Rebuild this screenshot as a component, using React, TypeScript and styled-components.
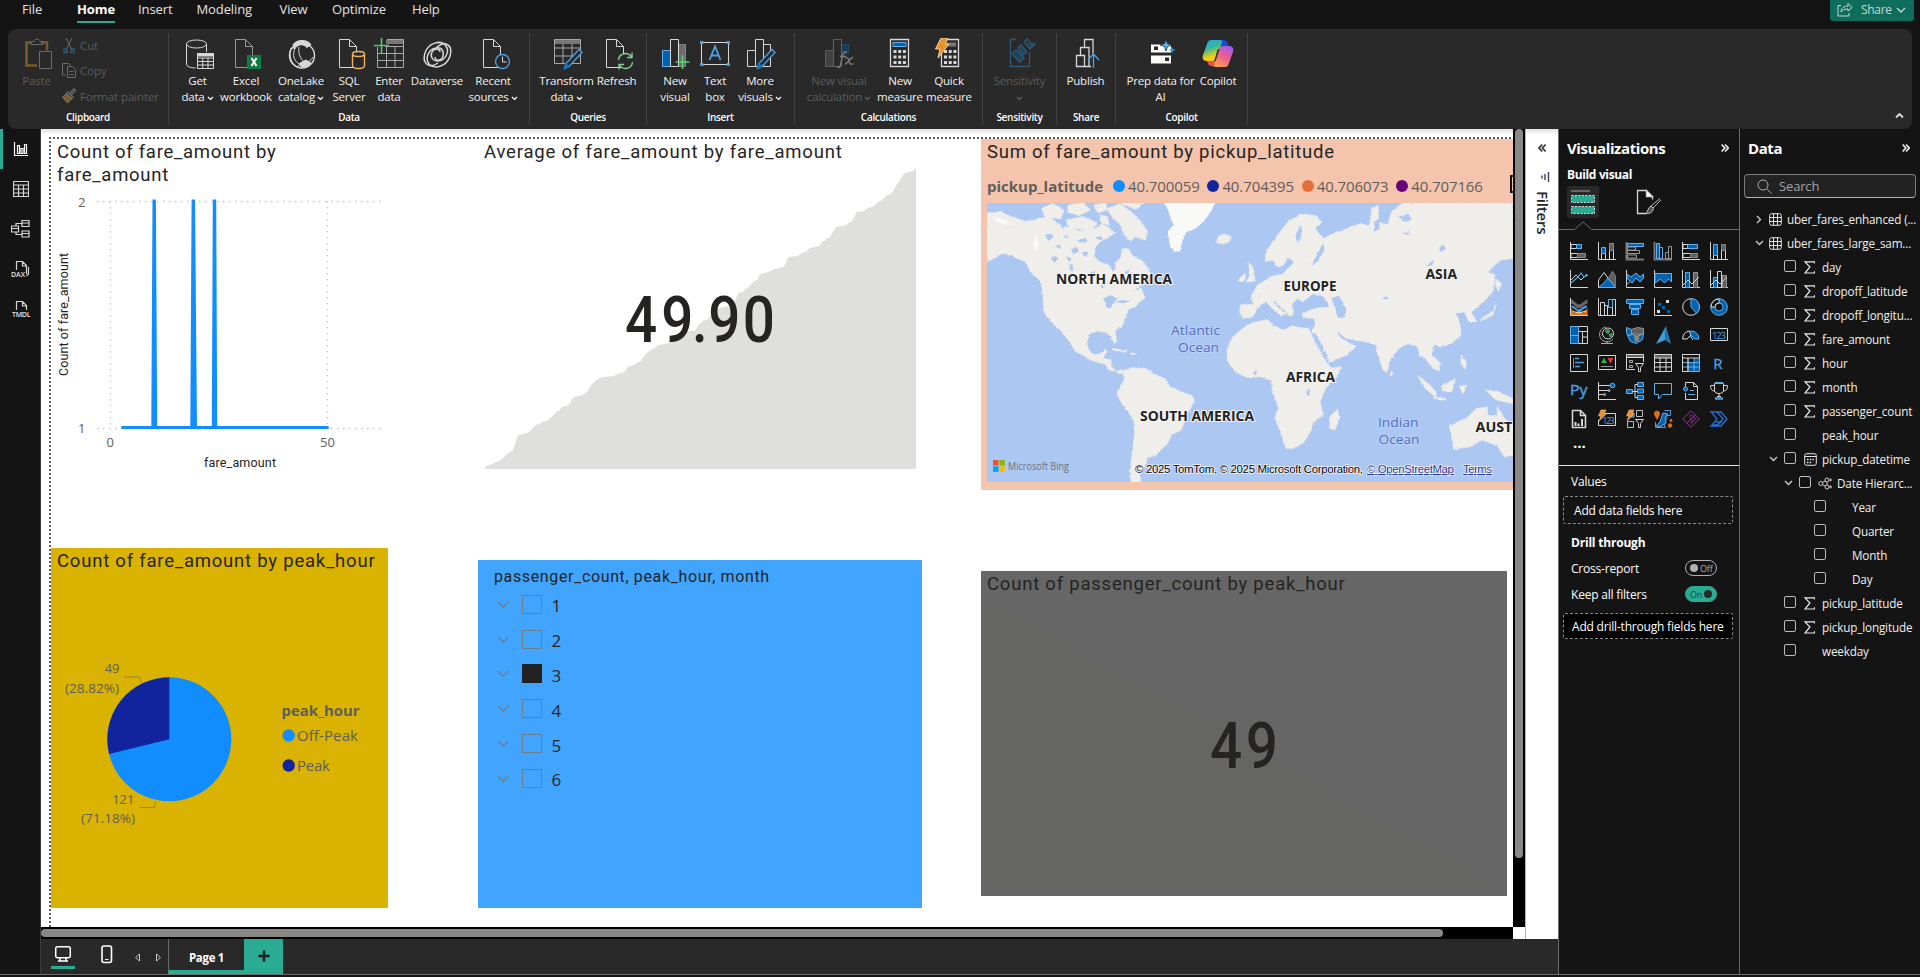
import React from 'react';
import styled, { createGlobalStyle } from 'styled-components';

const UI = `'Open Sans', 'Noto Sans', sans-serif`;
const DIN = `Roboto, 'Open Sans', sans-serif`;
const TEAL = '#2aac94';
const BLUE = '#118dff';
const NAVY = '#12239e';

const Global = createGlobalStyle`
  * { box-sizing: border-box; }
  html, body { margin: 0; background: #141414; }
  body { font-family: ${UI}; color: #fff; overflow: hidden; }
  svg { display: block; flex: none; }
`;

const Window = styled.div`
  display: flex;
  flex-direction: column;
  width: 1920px;
  height: 977px;
  background: #141414;
  overflow: hidden;
`;

/* ---------- menu ---------- */
const MenuBar = styled.nav`
  display: flex;
  flex: none;
  height: 29px;
  padding-left: 22px;
`;
const MenuItem = styled.div<{ $w: number; $active?: boolean }>`
  width: ${p => p.$w}px;
  height: 23px;
  font-size: 13px;
  line-height: 19px;
  letter-spacing: -0.1px;
  font-weight: ${p => (p.$active ? 700 : 400)};
  color: ${p => (p.$active ? '#fff' : '#e3e3e3')};
  span {
    display: inline-block;
    height: 23px;
    border-bottom: 2px solid ${p => (p.$active ? TEAL : 'transparent')};
  }
`;
const ShareButton = styled.div`
  display: flex;
  align-items: center;
  width: 84px;
  height: 21px;
  margin: 0 6px 0 auto;
  padding: 0 8px 2px 7px;
  border-radius: 0 0 3px 3px;
  background: #0e6e5b;
  color: #ccd6d3;
  font-size: 12px;
  letter-spacing: -0.3px;
  gap: 4px;
  span { margin-left: 4px; }
`;

/* ---------- ribbon ---------- */
const Ribbon = styled.div`
  position: relative;
  z-index: 2;
  display: flex;
  flex: none;
  height: 100px;
  margin: 0 8px;
  padding: 4px 0;
  border-radius: 8px;
  background: #292929;
`;
const Group = styled.section<{ $w: number; $pl: number }>`
  display: flex;
  flex-direction: column;
  width: ${p => p.$w}px;
  border-right: 1px solid #414141;
  > div { padding-left: ${p => p.$pl}px; }
`;
const GroupItems = styled.div`
  display: flex;
  height: 76px;
`;
const GroupLabel = styled.h6`
  margin: 0;
  font: 600 10px/16px ${UI};
  letter-spacing: -0.3px;
  text-align: center;
`;
const Command = styled.div<{ $w: number; $dx?: number; $off?: boolean }>`
  display: flex;
  flex-direction: column;
  align-items: center;
  width: ${p => p.$w}px;
  padding-top: 5px;
  font-size: 11.5px;
  line-height: 16px;
  letter-spacing: -0.2px;
  white-space: nowrap;
  color: ${p => (p.$off ? '#5c5c5c' : '#f2f2f2')};
  > svg { margin: 0 0 3px ${p => 2 * (p.$dx ?? 0)}px; }
  div { display: flex; align-items: center; gap: 2px; height: 16px; }
  div svg { margin: 2px 0 0; }
`;
const ClipList = styled.div`
  display: flex;
  flex-direction: column;
  margin-left: 9.5px;
`;
const ClipRow = styled.div`
  display: flex;
  align-items: center;
  gap: 4px;
  height: 26.3px;
  font-size: 11.5px;
  letter-spacing: -0.1px;
  color: #5c5c5c;
`;
const Collapse = styled.div`
  margin: auto 8px 7px auto;
`;

/* ---------- body ---------- */
const Body = styled.div`
  display: flex;
  flex: none;
  height: 845px;
`;
const Rail = styled.aside`
  display: flex;
  flex-direction: column;
  width: 41px;
  border-right: 1px solid #3c3c3c;
`;
const RailItem = styled.div<{ $active?: boolean }>`
  display: flex;
  align-items: center;
  justify-content: center;
  height: 40px;
  padding-right: 2px;
  border-left: 3px solid ${p => (p.$active ? TEAL : 'transparent')};
`;
const Work = styled.main`
  display: flex;
  flex-direction: column;
  width: 1517px;
`;
const WorkTop = styled.div`
  display: flex;
  height: 810px;
`;
const Scroller = styled.div`
  display: flex;
  flex-direction: column;
  width: 1472px;
`;
const Page = styled.div`
  height: 798px;
  padding: 8px 0 0 8px;
  overflow: hidden;
  background: linear-gradient(#e2e2e2, #fff 6px);
`;
const PageEdge = styled.div`
  height: 790px;
  padding: 2px 0 0 2px;
  background:
    repeating-linear-gradient(90deg, #5d5d5d 0 2px, transparent 2px 4px) 0 0 / 100% 2px no-repeat,
    repeating-linear-gradient(180deg, #5d5d5d 0 2px, transparent 2px 4px) 0 0 / 2px 100% no-repeat;
`;
const Report = styled.div`
  display: grid;
  grid-template-columns: 427px 503px 532px;
  grid-template-rows: 409px 379px;
  align-items: start;
`;
const Visual = styled.article<{ $w: number; $h: number; $top?: number; $bg?: string }>`
  width: ${p => p.$w}px;
  height: ${p => p.$h}px;
  margin-top: ${p => p.$top ?? 0}px;
  background: ${p => p.$bg ?? 'transparent'};
  overflow: hidden;
`;
const Title = styled.h2<{ $ls?: number }>`
  margin: 0;
  padding: 2px 0 0 6px;
  font: 400 18.5px/23px ${DIN};
  letter-spacing: ${p => p.$ls ?? 0.78}px;
  color: #252423;
  white-space: pre;
`;
const HTrack = styled.div`
  display: flex;
  align-items: center;
  height: 12px;
  background: #000;
`;
const HThumb = styled.div`
  width: 1402px;
  height: 8px;
  border-radius: 4px;
  background: #8a8886;
`;
const VBar = styled.div`
  width: 12px;
  background: #fff;
`;
const VTrack = styled.div`
  height: 798px;
  padding-left: 2px;
  background: #000;
`;
const VThumb = styled.div`
  width: 8px;
  height: 729px;
  border-radius: 4px;
  background: #8a8886;
`;
const FilterPane = styled.div`
  display: flex;
  flex-direction: column;
  align-items: center;
  width: 33px;
  padding-top: 14px;
  border-left: 1px solid #b5b5b5;
  background: linear-gradient(#e2e2e2, #fff 6px);
  color: #252423;
  svg { margin-bottom: 18px; }
  svg + svg { margin: 0 0 0 4px; }
`;
const FilterText = styled.span`
  margin: 8px 0 0 2px;
  writing-mode: vertical-rl;
  font-size: 15px;
  line-height: 18px;
  font-weight: 600;
  letter-spacing: -0.2px;
`;

/* ---------- map legend ---------- */
const Legend = styled.div`
  display: flex;
  align-items: center;
  height: 35px;
  margin-top: 4px;
  padding-left: 6px;
  font-size: 15px;
  letter-spacing: -0.1px;
  color: #605e5c;
  white-space: nowrap;
  b { flex: none; width: 126px; letter-spacing: 0; }
`;
const LegendItem = styled.span<{ $c: string }>`
  display: flex;
  flex: none;
  align-items: center;
  width: 94.4px;
  &::before {
    content: '';
    width: 12px;
    height: 12px;
    margin-right: 3px;
    border-radius: 50%;
    background: ${p => p.$c};
  }
`;
const LegendArrow = styled.i`
  flex: none;
  width: 8px;
  height: 18px;
  margin: -4px 0 0 19px;
  border: 2px solid #111;
`;
const MapBox = styled.div`
  padding-left: 6px;
`;

/* ---------- slicer ---------- */
const SlicerTitle = styled.h3`
  margin: 0;
  padding: 6px 0 0 16px;
  font: 400 16px/21px ${DIN};
  letter-spacing: 0.63px;
  color: #252423;
`;
const SlicerRow = styled.div`
  display: flex;
  align-items: center;
  height: 34.8px;
  padding-left: 19px;
  color: #252423;
  font-size: 17px;
  span { padding: 3px 0 0 10px; }
`;
const SlicerBox = styled.i<{ $on?: boolean }>`
  width: 20px;
  height: 19px;
  margin-left: 12px;
  border: 1px solid ${p => (p.$on ? '#212121' : '#727a84')};
  background: ${p => (p.$on ? '#212121' : 'transparent')};
`;

/* ---------- tabs ---------- */
const TabBar = styled.footer`
  display: flex;
  align-items: center;
  height: 35px;
  background: #292929;
`;
const ViewButton = styled.div<{ $w: number; $ml: number; $on?: boolean }>`
  display: flex;
  justify-content: center;
  width: ${p => p.$w}px;
  height: 24px;
  margin-left: ${p => p.$ml}px;
  padding-bottom: 3px;
  border-bottom: 3px solid ${p => (p.$on ? TEAL : 'transparent')};
`;
const Arrows = styled.div`
  display: flex;
  justify-content: space-between;
  width: 28px;
  margin: 1px 6px 0 15px;
`;
const Tab = styled.div`
  width: 76px;
  height: 35px;
  border-left: 1px solid #6b6b6b;
  border-bottom: 4px solid ${TEAL};
  font-size: 11.5px;
  font-weight: 700;
  line-height: 37px;
  letter-spacing: -0.3px;
  text-align: center;
`;
const AddTab = styled.div`
  display: flex;
  align-items: center;
  justify-content: center;
  width: 39px;
  height: 35px;
  padding-bottom: 2px;
  background: ${TEAL};
`;
const StatusEdge = styled.div`
  flex: 1;
  border-top: 1px solid #6b6b6b;
`;

/* ---------- panels ---------- */
const Panel = styled.aside<{ $w: number }>`
  width: ${p => p.$w}px;
  border-left: 1px solid #6b6b6b;
`;
const PanelHead = styled.header<{ $r: number }>`
  display: flex;
  align-items: center;
  justify-content: space-between;
  height: 38px;
  padding: 0 ${p => p.$r}px 0 8px;
  font-size: 15px;
  font-weight: 700;
  letter-spacing: -0.4px;
`;
const BuildTitle = styled.h4`
  margin: 0;
  padding-left: 8px;
  font: 700 12px/16px ${UI};
  letter-spacing: -0.35px;
`;
const ModeRow = styled.div`
  display: flex;
  gap: 34px;
  height: 38px;
  padding: 3px 0 0 8px;
`;
const ModeButton = styled.div<{ $on?: boolean }>`
  display: flex;
  align-items: center;
  justify-content: center;
  width: 32px;
  height: 32px;
  border-radius: 2px;
  background: ${p => (p.$on ? '#292929' : 'transparent')};
`;
const IconGrid = styled.div`
  display: grid;
  grid-template-columns: repeat(6, 28px);
  grid-auto-rows: 28px;
  place-items: center;
  padding: 7px 0 0 6px;
  svg { overflow: visible; }
`;
const More = styled.div`
  height: 33px;
  padding-left: 14px;
  font-size: 15px;
  font-weight: 700;
  line-height: 19px;
  border-bottom: 1px solid #e6e6e6;
`;
const WellLabel = styled.div<{ $b?: boolean; $h: number }>`
  display: flex;
  align-items: center;
  justify-content: space-between;
  height: ${p => p.$h}px;
  padding: 0 22px 0 12px;
  font-size: 12px;
  font-weight: ${p => (p.$b ? 700 : 400)};
  letter-spacing: -0.2px;
`;
const Well = styled.div<{ $black?: boolean }>`
  height: ${p => (p.$black ? 26 : 28)}px;
  margin: 0 6px 0 4px;
  padding-left: ${p => (p.$black ? 8 : 10)}px;
  border: 1px dashed #8a8a8a;
  border-radius: 2px;
  background: ${p => (p.$black ? '#000' : 'transparent')};
  font-size: 12px;
  line-height: ${p => (p.$black ? 25 : 27)}px;
  letter-spacing: -0.2px;
  white-space: nowrap;
`;
const Toggle = styled.div<{ $on?: boolean }>`
  display: flex;
  align-items: center;
  flex-direction: ${p => (p.$on ? 'row-reverse' : 'row')};
  gap: 2px;
  width: 32px;
  height: 16px;
  padding: 0 4px;
  border: 1px solid ${p => (p.$on ? TEAL : '#b0b0b0')};
  border-radius: 8px;
  background: ${p => (p.$on ? TEAL : 'transparent')};
  color: ${p => (p.$on ? '#17443b' : '#b0b0b0')};
  font-size: 9px;
  &::before {
    content: '';
    flex: none;
    width: 8px;
    height: 8px;
    border-radius: 50%;
    background: ${p => (p.$on ? '#292929' : '#b0b0b0')};
  }
`;
const Search = styled.div`
  display: flex;
  align-items: center;
  gap: 7px;
  height: 24px;
  margin: 7px 4px 9px 4px;
  padding-left: 12px;
  border: 1px solid #7d7d7d;
  border-bottom-color: #b5b5b5;
  border-radius: 4px;
  background: #222;
  color: #a5a5a5;
  font-size: 13px;
  letter-spacing: -0.15px;
`;
const Row = styled.div<{ $pl: number }>`
  display: flex;
  align-items: center;
  height: 24px;
  padding-left: ${p => p.$pl}px;
  font-size: 11.7px;
  font-weight: 500;
  letter-spacing: -0.15px;
  white-space: nowrap;
  color: #f0f0f0;
`;
const Check = styled.i`
  flex: none;
  width: 12px;
  height: 12px;
  margin-bottom: 2px;
  border: 1px solid #bdbdbd;
  border-radius: 2px;
`;
const Glyph = styled.span<{ $w: number }>`
  display: flex;
  flex: none;
  align-items: center;
  width: ${p => p.$w}px;
`;

/* ---------- small drawings ---------- */
type SvgProps = { w: number; h: number; c?: string; children: React.ReactNode };
const S = ({ w, h, c = '#d6d6d6', children }: SvgProps) => (
  <svg width={w} height={h} viewBox={`0 0 ${w} ${h}`} fill="none" stroke={c}>{children}</svg>
);
const Chevron = ({ s = 6, c = 'currentColor', w = 1.3, up = false }: { s?: number; c?: string; w?: number; up?: boolean }) => (
  <svg width={s + 2} height={s / 2 + 2} viewBox={`0 0 ${s + 2} ${s / 2 + 2}`} fill="none" stroke={c} strokeWidth={w}>
    <path d={up ? `M1 ${s / 2 + 1}L${s / 2 + 1} 1L${s + 1} ${s / 2 + 1}` : `M1 1L${s / 2 + 1} ${s / 2 + 1}L${s + 1} 1`} />
  </svg>
);
const Double = ({ left = false, c = '#e8e8e8' }: { left?: boolean; c?: string }) => (
  <S w={8} h={10} c={c}>
    <path strokeWidth="1.7" d={left ? 'M4.2 1.5L1 5L4.2 8.5M7.6 1.5L4.4 5L7.6 8.5' : 'M.6 1.5L3.8 5L.6 8.5M4 1.5L7.2 5L4 8.5'} />
  </S>
);

const W = '#d8d8d8';
const SKY = '#4ba0e1';
const pencil = (
  <>
    <path d="M27 11.500l3 3L17 28.500l-4.500 2 1.500-5z" fill="#292929" stroke={SKY} strokeWidth="1.400" />
    <path d="M12.500 30.500l1.500-5 3 3z" fill="#0078d4" stroke="#0078d4" />
  </>
);
const doc = <path d="M3.500 1.500h10l7 7V29.500h-17zM13.500 1.500v7h7" />;

const icons: Record<string, React.ReactNode> = {
  get: (
    <>
      <ellipse cx="12.500" cy="6" rx="10" ry="4" />
      <path d="M2.500 6v20c0 2.500 4 4 9 4M22.500 6v8" />
      <path d="M13.500 15.500h16v15h-16zM13.500 20h16M13.500 23.500h16M13.500 27h16M18.700 20v10M24 20v10" fill="#292929" />
      <path d="M13 15h17v3.500H13z" fill={W} stroke="none" />
    </>
  ),
  excel: (
    <>
      <g stroke="#9a9a9a">{doc}</g>
      <path d="M15 17h14v14H15z" fill="#107c41" stroke="none" />
      <path d="M19.500 20l5 8M24.500 20l-5 8" stroke="#fff" strokeWidth="2" />
    </>
  ),
  lake: (
    <>
      <circle cx="16" cy="17.500" r="12.500" strokeWidth="1.400" />
      <path d="M7 6.500C11 1 21 1 25 6.500L21 9.500C17 5.500 12 6 8.500 11z" fill={W} />
      <path d="M5 10c-3 8 1 16 6 19l3-3C8 24 6 17 9 10zM13 9c-1 6 1 11 5 15M17 24c4 1 8-1 10-5" />
      <path d="M14 25l6-3 5 3c-3 4-8 5-11 3z" fill={W} />
    </>
  ),
  sql: (
    <>
      {doc}
      <g stroke="#f0b266" strokeWidth="1.400"><path d="M16.500 16v11.500c0 4 12 4 12 0V16" fill="#292929" /><ellipse cx="22.500" cy="16" rx="6" ry="2.500" fill="#292929" /></g>
    </>
  ),
  enter: (
    <>
      <path d="M4.500 9v20.500h26v-28H14M4.500 15.500h26M4.500 22.500h26M13.500 8v22M22 8v22M12 8.500h18.500" stroke="#a8a8a8" />
      <path d="M13 2h17v4H13z" fill="#777" stroke="none" />
      <path d="M8.500 0v15M1 7.500h15" stroke="#57c46b" strokeWidth="1.600" />
    </>
  ),
  dataverse: (
    <g strokeWidth="1.500">
      <path d="M17 25C7 32 1 24 4 15C7 5 20 1 25 8c4 6-1 15-8 15-6 0-8-5-6-9 2-4 8-4 8 0" />
      <path d="M15 10C25 1 32 8 29 18C26 28 14 32 8 26 4 21 7 11 15 10c6-1 8 3 7 8-1 5-8 6-8 1" />
    </g>
  ),
  recent: (
    <>
      {doc}
      <circle cx="22.500" cy="23.500" r="7" fill="#292929" stroke={SKY} strokeWidth="1.400" />
      <path d="M22.500 18.500v5.500h4" />
    </>
  ),
  transform: (
    <>
      <path d="M2.500 1.500h26v24h-26zM2.500 10h26M2.500 18h26M11 6v20M20 6v20" stroke="#a8a8a8" />
      <path d="M3 2h25v4H3z" fill="#777" stroke="none" />
      {pencil}
    </>
  ),
  refresh: (
    <>
      {doc}
      <circle cx="22.500" cy="23" r="7.500" fill="#292929" stroke="none" />
      <path d="M15.500 22a7 7 0 0 1 13-3M29.500 24a7 7 0 0 1-13 3M29 14.500v5h-5M16 31.500v-5h5" stroke="#7fd08f" strokeWidth="1.400" />
    </>
  ),
  newvisual: (
    <>
      <path d="M18.500 6.500h7v22h-7z" fill="#6b6b6b" stroke="#888" />
      <path d="M2.500 12.500h8v16h-8z" fill="#0063b1" stroke="#69afe5" />
      <path d="M10.500 1.500h8v27h-8z" fill="#292929" />
      <path d="M22.500 17v14M15.500 24h14" stroke="#57d46b" strokeWidth="1.600" />
    </>
  ),
  textbox: (
    <>
      <path d="M2.500 4.500h27v22h-27z" />
      <path d="M1 3h3.500v3H1zM27.500 3H31v3h-3.500zM1 25h3.500v3H1zM27.500 25H31v3h-3.500z" fill={SKY} stroke="none" />
      <path d="M10.500 22L16 8.500 21.500 22M12.500 17.500h7" stroke={SKY} strokeWidth="1.800" />
    </>
  ),
  morevisuals: (
    <>
      <path d="M18.500 6.500h7v22h-7zM2.500 12.500h8v16h-8z" />
      <path d="M10.500 1.500h8v27h-8z" fill="#292929" />
      {pencil}
    </>
  ),
  calc: (
    <>
      <path d="M2.500 12.500h8v16h-8z" fill="#414141" stroke="#5c5c5c" />
      <path d="M18.500 6.500h7v9h-7z" fill="#123e5e" stroke="#264b66" />
      <path d="M10.500 1.500h8v27h-8z" fill="#292929" stroke="#626262" />
      <path d="M24 14c-3-1-4 1-4.500 4l-2 9c-.5 2-1.500 3-3.500 2M17 18.500h6M22.500 20c2-1 3 0 3.500 3 .5 3 2 4 4 2.500M30 19.500c-3 0-5 6-8 6.500" stroke="#7a7a7a" strokeWidth="1.400" />
    </>
  ),
  measure: (
    <>
      <path d="M6.500 1.500h18v27h-18z" strokeWidth="1.300" />
      <path d="M9 4.500h13v4H9z" fill="#0063b1" stroke="#69afe5" />
      <path d="M9.500 13.500h12.500M9.500 19h12.500M9.500 24.500h12.500" strokeWidth="3" strokeDasharray="3 1.700" />
    </>
  ),
  quick: (
    <>
      <path d="M8.500 1.500h17v27h-17z" strokeWidth="1.300" />
      <path d="M12 4.500h11v4H12z" fill="#777" stroke="none" />
      <path d="M11 13.500h12.500M11 19h12.500M11 24.500h12.500" strokeWidth="3" strokeDasharray="3 1.700" />
      <path d="M8 0h7l-3 6h4L5 20l2-9H2.500z" fill="#e8912d" stroke="#f8d7a0" />
    </>
  ),
  sens: (
    <g stroke="#2d5876" strokeWidth="1.300">
      <path d="M12 1.500H6.500v27h19V14" />
      <path d="M8 16l4-4 8 8-4 4zM14 10l3-3 6 7-4 3zM20 4l3-3 2 2M20 4l6 7 6-6M24 2l5 6" fill="#234055" />
    </g>
  ),
  publish: (
    <>
      <path d="M21 28.500H6.500v-11h8v11M10.500 17.500v-8h8.500v19M14.500 9.500v-8h8.500v14" strokeWidth="1.300" />
      <path d="M23.500 30V16.500M18 22l5.500-6 5.500 6" stroke={SKY} strokeWidth="1.400" />
    </>
  ),
  prep: (
    <>
      <path d="M6 6.500h20v8H6zM6 17.500h20v8H6z" fill="#fff" stroke="none" />
      <path d="M9 8.500h4v3.500H9zM20 19.500h4v3.500h-4z" fill="#292929" stroke="none" />
      <path d="M21 1l1.500 4.500L27 7l-4.500 1.500L21 13l-1.500-4.500L15 7l4.500-1.500z" fill="#4cb5ff" stroke="#292929" strokeWidth=".8" />
      <path d="M27 8.500l.9 2.600 2.600.9-2.600.9-.9 2.600-.9-2.600-2.600-.9 2.600-.9z" fill="#2f9be8" stroke="none" />
    </>
  ),
  copilot: (
    <>
      <defs>
        <linearGradient id="cpA" x1="0" y1="0" x2=".3" y2="1"><stop offset="0" stopColor="#18a5f0" /><stop offset=".45" stopColor="#35b89a" /><stop offset=".85" stopColor="#f2cd14" /></linearGradient>
        <linearGradient id="cpB" x1=".8" y1="0" x2=".3" y2="1"><stop offset="0" stopColor="#9a5cf0" /><stop offset=".5" stopColor="#ec5b93" /><stop offset="1" stopColor="#ff9b52" /></linearGradient>
      </defs>
      <g stroke="none">
        <path d="M17 2h5c2 0 3 1 4 4l1 4h-6z" fill="#1c46d8" />
        <path d="M9 28c-2 0-3-2-4-5l-1-3h9l3 9z" fill="#f04e4e" />
        <path d="M9 2h9c2 0 2.500 1 2 3l-5 15c-1 2-2 3-4 3H5c-4 0-5-3-4-6L5 6c1-3 2-4 4-4z" fill="url(#cpA)" />
        <path d="M23 29h-9c-2 0-2.500-1-2-3l5-15c1-2 2-3 4-3h6c4 0 5 3 4 6l-4 11c-1 3-2 4-4 4z" fill="url(#cpB)" />
        <path d="M17.500 11l-3.500 11c-.5 1-1 1.500-2 1.500l3.500-11.500c.3-.7 1-1 2-1z" fill="#292929" />
      </g>
    </>
  ),
};

type Cmd = { i: string; w: number; dx?: number; l: string[]; drop?: boolean; off?: boolean };
const groups: { label: string; w: number; pl: number; items: Cmd[] }[] = [
  { label: 'Data', w: 361, pl: 6.5, items: [
    { i: 'get', w: 44, dx: 2, l: ['Get', 'data'], drop: true },
    { i: 'excel', w: 53, dx: 2, l: ['Excel', 'workbook'] },
    { i: 'lake', w: 57, dx: 1, l: ['OneLake', 'catalog'], drop: true },
    { i: 'sql', w: 39, dx: 2.5, l: ['SQL', 'Server'] },
    { i: 'enter', w: 41, l: ['Enter', 'data'] },
    { i: 'dataverse', w: 55, l: ['Dataverse'] },
    { i: 'recent', w: 57, dx: 3, l: ['Recent', 'sources'], drop: true } ] },
  { label: 'Queries', w: 117, pl: 9.5, items: [
    { i: 'transform', w: 54, dx: 1, l: ['Transform', 'data'], drop: true },
    { i: 'refresh', w: 46, dx: 2, l: ['Refresh'] } ] },
  { label: 'Insert', w: 148, pl: 7, items: [
    { i: 'newvisual', w: 42, dx: 1, l: ['New', 'visual'] },
    { i: 'textbox', w: 38, l: ['Text', 'box'] },
    { i: 'morevisuals', w: 52, dx: 1, l: ['More', 'visuals'], drop: true } ] },
  { label: 'Calculations', w: 188, pl: 6, items: [
    { i: 'calc', w: 76, l: ['New visual', 'calculation'], drop: true, off: true },
    { i: 'measure', w: 46, l: ['New', 'measure'] },
    { i: 'quick', w: 52, l: ['Quick', 'measure'] } ] },
  { label: 'Sensitivity', w: 74, pl: 6, items: [{ i: 'sens', w: 61, l: ['Sensitivity', ''], drop: true, off: true }] },
  { label: 'Share', w: 59, pl: 2, items: [{ i: 'publish', w: 53, l: ['Publish'] }] },
  { label: 'Copilot', w: 132, pl: 6, items: [
    { i: 'prep', w: 77, l: ['Prep data for', 'AI'] },
    { i: 'copilot', w: 38, l: ['Copilot'] } ] },
];

/* ---------- visual gallery, 18px icons ---------- */
const B = '#0063b1';
const L = '#69afe5';
const G = '#5f5f5f';
const axis = <path d="M.5 0v17.500H18" />;
const gallery: React.ReactNode[] = [
  <>{axis}<path d="M1 2.500h6v4H1zM1 11.500h8v4H1z" /><path d="M6.500 2.500h5v4h-5z" fill={B} stroke={L} /><path d="M7.500 11.500h8v4h-8z" fill={G} stroke="#8a8a8a" /></>,
  <>{axis}<path d="M3.500 11.500h4v6h-4zM11.500 8.500h4v9h-4z" /><path d="M3.500 5.500h4v6h-4z" fill={B} stroke={L} /><path d="M11.500 1.500h4v7h-4z" fill={G} stroke="#8a8a8a" /></>,
  <><path d="M.5 0v17.500H18" strokeWidth="2" stroke="#777" /><path d="M1.500 1.500h16v3h-16z" fill={B} stroke={L} /><path d="M1.500 5h8v3h-8zM1.500 8.500h12v3h-12zM1.500 13h9v3h-9z" stroke="#999" /></>,
  <><path d="M.5 0v17.500H18" strokeWidth="2" stroke="#777" /><path d="M2.500 1.500h3v15h-3z" fill={B} stroke={L} /><path d="M5.500 5.500h3v11h-3z" stroke={L} /><path d="M11.500 10.500h3v6h-3zM14.500 4.500h3v12h-3z" stroke="#999" /></>,
  <>{axis}<path d="M1 2.500h14v4H1z" /><path d="M5.500 2.500h10v4h-10z" fill={B} stroke={L} /><path d="M1 11.500h14v4H1z" /><path d="M8.500 11.500h7v4h-7z" fill={G} stroke="#8a8a8a" /></>,
  <>{axis}<path d="M3.500 13h4v4.500h-4zM11.500 8h4v9.500h-4z" /><path d="M3.500 2.500h4v11h-4z" fill={B} stroke={L} /><path d="M11.500 2.500h4v6h-4z" fill={G} stroke="#8a8a8a" /></>,
  <>{axis}<path d="M1 10l5-5 5 5 6-6" /><path d="M1 13l6-5 4-5 3 4 4-2" stroke={SKY} strokeWidth="1.200" /></>,
  <><path d="M11 7l3.500-6 3 5v11H11z" fill={G} stroke="#777" /><path d="M.5 17.500V10L6 2.500 15 15" /><path d="M.5 17.500L6 13l4-5 7.500 9.500z" fill={B} stroke={L} /></>,
  <>{axis}<path d="M1 4l4 3 5-4 4 4 3.500-3v4L14 12l-4-4-4 5-5-5z" fill={B} stroke={L} /><path d="M1 14l3-2" stroke={L} /></>,
  <>{axis}<path d="M1 3.500h16.500V12l-3-3-4 4-4-4L1 13z" fill={B} stroke={L} /></>,
  <>{axis}<path d="M3.500 2.500h4v15h-4z" fill={B} stroke={L} /><path d="M11.500 2.500h4v15h-4z" fill={G} stroke="#999" /><path d="M1 15l5-5 4 4 7-7" /></>,
  <>{axis}<path d="M3.500 7.500h4v10h-4z" fill={B} stroke={L} /><path d="M7.500 1.500h4v16h-4z" /><path d="M12.500 5.500h4v12h-4z" fill={G} stroke="#999" /><path d="M1 15l5-5 4 4 7-7" /></>,
  <>{axis}<path d="M1 10l4 5 4-3 4 3 4.500-5v7H1z" fill="#e07010" stroke="none" /><path d="M1 1.500c4 1 5 5 8 5s4-4 8.500-5v4c-4 1-5 5-8.500 5s-4-4-8-5z" fill="#666" stroke="none" /><path d="M1.500 8.500c3 0 4 4 7.500 4s4-4 8-4" strokeWidth="2" stroke={SKY} /><path d="M3 13.500l6 1.500 7-2" stroke="#f3e3d0" /></>,
  <>{axis}<path d="M2.500 4.500h4v13h-4zM6.500 7.500h3v10M14.500 1.500h3v16h-3z" /><path d="M10.500 1.500h4v8h-4z" stroke={L} /></>,
  <><path d="M.5 1.500h17v4H.5zM3.500 6.500h11v4h-11zM5.500 11.500h7v5h-7z" fill={B} stroke={L} /></>,
  <>{axis}<path d="M12 2h3v3h-3zM3 12h3v3H3z" fill="#ddd" stroke="none" /><path d="M4 5h3v3H4zM8 8h3v3H8zM13 12h3v3h-3z" fill={B} stroke="none" /></>,
  <><circle cx="9" cy="9" r="8.300" /><path d="M9 .7a8.300 8.300 0 0 1 5.500 14.500L9 9z" fill={B} stroke={L} /></>,
  <><circle cx="9" cy="9" r="6.300" stroke={B} strokeWidth="4" /><circle cx="9" cy="9" r="8.300" stroke={L} /><circle cx="9" cy="9" r="4" stroke={L} /><path d="M1 9a8 8 0 0 1 8-8v4a4 4 0 0 0-4 4z" fill="#141414" /></>,
  <><path d="M.5.500h17v17H.5z" fill="#141414" /><path d="M.5.500h8v17h-8z" fill={B} stroke={L} /><path d="M.5 9.500h8" stroke={L} /><path d="M8.500 5.500h9M12.500 5.500v12M12.500 11h5" /></>,
  <><circle cx="10" cy="7.500" r="5.500" /><path d="M7 5l3-2 2 2-2 3zM11 9l3-2v3l-2 1z" fill="#3a9c4e" stroke="#3a9c4e" /><path d="M8 1a7.500 7.500 0 1 0 7 12M9 15v2.500M3 17.500h12" stroke="#aaa" /></>,
  <><path d="M.5 1.500l5 2v5l-4 1-1-3z" fill={B} stroke={L} /><path d="M5.500 3.500l6-2 6 1v5l-5 1-7-1z" fill={G} stroke="#999" /><path d="M1.500 9.500l5-1 5 2 6-3-1 6-6 4-6-2z" fill={B} stroke={L} /><path d="M8 10l5-1v6l-4 1z" fill="#888" stroke="none" /></>,
  <><path d="M12 0L2 18l9-4z" fill="#3f9fd8" stroke="none" /><path d="M12 0l5 18-6-4z" fill="#2576ad" stroke="none" /></>,
  <><path d="M1 13a8 8 0 0 1 16 0h-4.500a3.500 3.500 0 0 0-3-3z" fill={B} stroke={L} /><path d="M.7 13A8.300 8.300 0 0 1 7 5l2 4-4 4zM9 11l2 3" fill="#141414" /></>,
  <><path d="M.5 2.500h17v12H.5z" /><text x="9" y="12.500" textAnchor="middle" fontSize="9.500" fontFamily="Open Sans" fill={SKY} stroke="none" textLength="14">123</text></>,
  <><path d="M.5.500h17v17H.5z" /><path d="M3.500 4v10" stroke="#888" /><path d="M5 4.500h4M5 12.500h5" stroke={SKY} strokeWidth="1.500" /><path d="M5 8.500h9" stroke={SKY} strokeWidth="1.500" /></>,
  <><path d="M.5 1.500h17v14H.5z" /><path d="M3 9l3-5 3 5z" fill="#3fae49" stroke="none" /><path d="M9.500 4h6l-3 5.500z" fill="#e03b3b" stroke="none" /><path d="M3 12.500h12" stroke="#999" /></>,
  <><path d="M9 15.500H.5v-15h17V8" /><path d="M.5.500h17v3H.5z" fill="#666" /><path d="M3.500 6.500h3v2h-3zM3.500 11.500h3v2h-3z" stroke="#aaa" /><path d="M9.500 9.500h8l-3 4v4h-2v-4z" fill="#141414" /></>,
  <><path d="M.5.500h17v17H.5zM.5 8.500h17M.5 13h17M6 4v13M12 4v13" /><path d="M.5.500h17v3.500H.5z" fill="#666" /></>,
  <><path d="M6.500 8.500h11v9h-11zM12 4.500h5.500v4H12z" fill={B} stroke="none" /><path d="M.5.500h17v17H.5zM.5 8.500h17M.5 13h17M6 4v13M12 4v13" stroke={L} /><path d="M.5.500h17v3.500H.5zM.5 4v13.500H6V4" /></>,
  <text x="8" y="14.500" textAnchor="middle" fontSize="15" fontFamily="Open Sans" fill={SKY} stroke={SKY} strokeWidth=".4">R</text>,
  <text x="0" y="13" fontSize="14.500" fontFamily="Open Sans" fill={SKY} stroke={SKY} strokeWidth=".4" textLength="17.500" lengthAdjust="spacingAndGlyphs">Py</text>,
  <>{axis}<path d="M1 3.500h11M1 8.500h8M1 12.500h4M8 8.500h4" /><circle cx="14.500" cy="3.500" r="2.300" fill={B} stroke={L} /><circle cx="11" cy="8.500" r="1.500" fill="#999" stroke="none" /><circle cx="6.500" cy="12.500" r="1.500" fill="#999" stroke="none" /></>,
  <><path d="M.5 7.500h6v4h-6zM11.500.500h6v4h-6zM11.500 7h6v4h-6zM11.500 13.500h6v4h-6z" fill={B} stroke={L} /><path d="M6.500 9.500h5M9 2.500v13M9 2.500h2.500M9 15.500h2.500" /></>,
  <path d="M.5 1.500h17v11h-9l-4 4.500v-4.500h-4z" stroke={L} />,
  <><path d="M3.500 5V.500h8l4 4v13h-12V11M11.500.500v4h4" /><circle cx="3.500" cy="7" r="2" fill={B} stroke={L} /><path d="M8 8.500h4M6 12.500h7" stroke={L} /></>,
  <><path d="M4.500 1.500h9v7c0 4-9 4-9 0zM4.500 3.500h-4c0 4 1.500 5.500 4.500 5.500M13.500 3.500h4c0 4-1.500 5.500-4.500 5.500" /><path d="M5 1h8" stroke={L} strokeWidth="2" /><path d="M9 11.500V15M7 14.500h4" /><path d="M5 16.500h8" stroke={SKY} strokeWidth="2.500" /></>,
  <><path d="M2.500.500h8l5 5v12h-13zM10.500.500v5h5" strokeWidth="1.600" /><path d="M5.500 16v-4M8.500 16v-2.500M12 16V9" strokeWidth="2" /></>,
  <><path d="M7 3.500h10.500v12H.5V10" /><text x="10.500" y="13.500" textAnchor="middle" fontSize="9" fontFamily="Open Sans" fill={SKY} stroke="none" textLength="12.500">123</text><path d="M3 0h5L6 4h2L1 11l2-5H.5z" fill="#e8912d" stroke="#f0c080" strokeWidth=".6" /></>,
  <><path d="M10.500.500h6v6h-6zM1.500 11.500h6v6h-6z" stroke="#bbb" /><path d="M5 3h3v4H5z" fill={B} stroke={L} /><path d="M9.500 9.500h8l-3 4v4h-2v-4z" /><path d="M3 0h5L6 4h2L1 11l2-5H.5z" fill="#e8912d" stroke="#f0c080" strokeWidth=".6" /></>,
  <><path d="M1.500 12v5.500h10l-2-5 4-4-2-3h5v-5h-6" stroke={SKY} /><path d="M9 3l5 1-3 4 1 5-6 4-4-1 4-4z" fill={B} stroke={L} /><path d="M3 10L.3 5a3 3 0 1 1 5.400 0z" fill="#e07010" stroke="none" /><circle cx="16" cy="15.500" r="2.200" fill="#e07010" stroke="none" /><circle cx="17" cy="10.500" r="1.400" fill="#e07010" stroke="none" /></>,
  <g stroke="#9a2ea1"><path d="M9 .8l8.200 8.200L9 17.200.8 9z" /><path d="M9 4.500l4.500 4.500L9 13.500M9 4.500C7 6 8 8 9 9s2 3 0 4.500M13.500 5L5 13" /></g>,
  <g stroke="#2372d6" strokeWidth="1.300"><path d="M1 2h10l6 7-6 7H1l6-7zM7 2l6 7-6 7M3 15h5M6 12h6" /></g>,
];

/* ---------- charts ---------- */
const AxisText = styled.text<{ $din?: boolean; $size?: number }>`
  font-family: ${p => (p.$din ? DIN : UI)};
  font-size: ${p => p.$size ?? 13}px;
  fill: ${p => (p.$din ? '#252423' : '#605e5c')};
`;
const BigNumber = styled.text`
  font-family: ${DIN};
  font-weight: 500;
  font-size: 65px;
  fill: #252423;
`;

const LineChart = () => (
  <svg width="337" height="290" viewBox="51 187 337 290" fill="none">
    <g stroke="#c8c6c4" strokeWidth="1.300" strokeDasharray="1.500 4.500">
      <path d="M97 201.500H381M97 428.500H381" /><path d="M110.500 201V428M327.500 201V428" />
    </g>
    <path d="M122.500 427.500H327.500" stroke={BLUE} strokeWidth="3" strokeLinecap="round" />
    <path d="M151.300 428L152.500 199.500h3.400l1.300 228.500zM190.300 428L191.600 199.500h3.400l2 228.500zM211.800 428l1-228.500h3.400l1 228.500z" fill={BLUE} />
    <AxisText x="78" y="206.500">2</AxisText>
    <AxisText x="78" y="433">1</AxisText>
    <AxisText x="110.300" y="446.500" textAnchor="middle">0</AxisText>
    <AxisText x="327.500" y="446.500" textAnchor="middle">50</AxisText>
    <AxisText $din $size={12.500} x="204" y="466.500" textLength="72">fare_amount</AxisText>
    <AxisText $din $size={12.500} textLength="123" transform="translate(68 376) rotate(-90)">Count of fare_amount</AxisText>
  </svg>
);

const trend = '42,1017 50,1007 65,1003 78,996 90,992 105,978 120,965 128,962 134,944 144,915 165,911 178,905 195,886 208,882 217,875 232,872 250,855 262,843 268,842 276,830 290,828 299,821 308,804 325,797 338,795 354,783 362,767 375,753 388,745 400,741 430,739 448,730 462,727 475,710 492,705 500,698 511,695 523,677 540,661 552,656 565,645 592,641 610,620 640,608 660,603 675,602 684,586 700,572 714,569 727,547 745,535 775,529 795,512 806,488 816,487 830,476 853,452 862,450 869,432 890,428 915,417 940,411 948,400 955,382 985,377 995,369 1008,365 1020,354 1048,348 1057,334 1064,333 1072,324 1080,321 1090,303 1100,290 1128,286 1136,278 1144,275 1152,265 1159,246 1182,243 1194,234 1206,231 1222,218 1236,211 1250,196 1262,192 1270,182 1280,165 1302,131 1312,127 1330,123 1338,113 1338,1017';
const KpiCard = () => (
  <svg width="444" height="319" viewBox="478 164 444 319">
    <g transform="translate(470 130) scale(.33333)"><polygon points={trend} fill="#dfdfde" /></g>
    <BigNumber transform="translate(625 342) scale(.87 1)" x="0 41.700 77 95.700 135.300">49.90</BigNumber>
  </svg>
);

const land = [
  'M45 265L80 260 110 275 150 290 185 280 210 275 240 300 290 318 330 312 352 298 372 310 385 325 372 332 345 350 332 370 330 395 345 412 368 420 378 440 388 432 385 415 400 400 405 372 420 370 432 392 455 405 470 425 482 450 455 480 430 500 455 490 465 520 450 530 440 545 420 552 412 580 405 600 385 618 390 650 383 658 375 635 360 622 340 618 318 625 310 650 315 675 330 690 350 685 360 672 364 680 352 700 375 705 375 725 388 738 408 736 405 746 370 735 360 718 340 712 320 705 300 690 280 680 268 655 245 622 225 600 215 590 197 560 193 500 188 470 160 440 148 410 125 400 110 390 85 385 60 402 45 410z',
  'M365 250L400 238 430 262 450 285 472 320 465 345 440 335 425 350 410 330 400 300 380 280z',
  'M190 250l30-14 30 20-10 25-40-5zM260 240l40-6 20 20-30 18-30-10zM255 285l45-10 40 20-20 20-55-5zM330 240l30-6 5 20-25 10zM345 270l20 5 5 25-20-5zM400 234h60l-20 20z',
  'M660 335l15-8 18 8-4 15-20 8-15-8z',
  'M408 738L430 728 470 732 490 748 520 762 530 785 560 800 590 812 597 828 580 860 570 890 560 915 535 930 525 955 505 975 495 990 470 1000 465 1020 450 1050 455 1071H428L425 1040 432 980 438 920 435 885 420 860 400 830 390 805 400 785 410 765z',
  'M740 597L790 583 805 600 835 615 855 603 900 612 915 650 935 690 950 715 960 730 986 725 975 755 945 790 930 830 938 870 910 895 905 920 885 955 860 970 840 970 825 920 810 880 820 850 805 800 800 765 770 755 735 757 705 740 685 710 682 680 695 640 720 615z',
  'M976 853L983 875 970 915 957 912 955 880z',
  'M716 560L718 540 752 538 748 512 765 480 800 455 830 448 850 425 862 412 845 395 832 422 815 425 805 405 782 410 790 375 815 335 845 290 880 268 920 272 935 295 915 310 940 340 975 320 1000 312 1040 295 1062 305 1068 250 1085 240 1085 290 1110 300 1120 260 1150 234H1443V400L1410 405 1375 440 1395 450 1390 500 1360 535 1332 560 1345 590 1325 590 1315 560 1290 565 1300 590 1305 630 1280 655 1250 665 1232 657 1226 690 1250 715 1246 738 1230 730 1210 700 1195 690 1190 665 1165 655 1140 670 1115 705 1108 742 1098 735 1085 690 1080 660 1050 650 1000 640 972 618 985 640 1025 665 1000 690 955 712 940 690 920 650 905 622 918 600 915 580 885 578 883 565 920 550 955 545 950 530 935 510 905 512 885 530 870 520 855 540 860 565 850 575 835 555 812 530 800 522 820 550 840 565 828 572 800 545 785 530 765 545 752 575 725 580z',
  'M740 415l10 8 8 45-24 3 10-20zM716 458l14-12-2 22-12 2z',
  'M1273 902L1320 880 1345 850 1375 846 1375 870 1400 875 1402 845 1420 880 1443 900V990L1420 995 1400 960 1360 945 1330 965 1285 972 1280 930z',
  'M1370 795l35 5 38 22v14l-45-12zM1252 785l36-22-8 38-26-4zM1190 752l22 18 28 32-4 14-28-28zM1235 815l30 6-2 4-30-4zM1300 785l20-4-10 25zM1305 690l14 20-4 25-10-25zM1400 462l12 16-8 20-8-20zM1398 540l-8 30-34 18 4-8 28-20zM1118 738l6 10-8 4z',
  'M378 670l40 8-4 4-36-8zM425 684l18 2-14 4z',
].join('');
const lakes = 'M928 375l10-20 4 20-22 38-12 6zM960 520l20-8 20 40-4 25-18 2-8-30zM895 520l20-15 22 28-30 6zM355 520l20-10 18 12-12 10-8 18-10-2zM385 530l22-5 18 4-20 6zM1215 420l15-15 2 8-14 14zM1095 520l16-6-4 10zM1245 370l15-10 4 12-14 8zM895 795l8-4-2 22-6-4zM240 300l14-8 4 12-14 6zM285 345l20-6 8 10-22 4zM245 335l14-4 3 10zM300 380l14 2-4 14-12-8zM262 420l10-3 2 22-8-4zM905 620l16 10 34 78-8-2zM1075 290l12-8 2 30-16 8zM750 745l12-6-2 12zM225 365l14-6 2 12zM320 440l12 2-6 20-8-8zM200 330l16-6 6 14-14 10zM215 400l12-8 8 10-12 10zM268 372l18-4 4 14-16 4zM255 395l14 4-6 14zM335 340l14-8 2 14zM410 440l14-6-4 16zM440 450l10-4-2 14zM350 470l8 12-10 10zM1140 275l26-8 8 16-22 8zM1150 325l18-6 2 12zM865 330l14-30 4 18-8 36-8-8z';

type Label = { x: number; y: number; w: number; t: string; ocean?: boolean };
const places: Label[] = [
  { x: 69, y: 81, w: 116, t: 'NORTH AMERICA' },
  { x: 296.500, y: 88, w: 53, t: 'EUROPE' },
  { x: 438.500, y: 76, w: 31.500, t: 'ASIA' },
  { x: 299, y: 179, w: 49, t: 'AFRICA' },
  { x: 153, y: 217.500, w: 114, t: 'SOUTH AMERICA' },
  { x: 488.500, y: 228.500, w: 79, t: 'AUSTRALIA' },
  { x: 184, y: 131.500, w: 49, t: 'Atlantic', ocean: true },
  { x: 191, y: 148.500, w: 41, t: 'Ocean', ocean: true },
  { x: 391, y: 224, w: 40.500, t: 'Indian', ocean: true },
  { x: 391.500, y: 241, w: 41, t: 'Ocean', ocean: true },
];
const Place = styled.text<{ $ocean?: boolean }>`
  font-family: ${UI};
  font-size: ${p => (p.$ocean ? 13.5 : 14)}px;
  font-weight: ${p => (p.$ocean ? 400 : 700)};
  fill: ${p => (p.$ocean ? '#4c6fc4' : '#222')};
  stroke: ${p => (p.$ocean ? '#bcd0f5' : '#f6f6f4')};
  stroke-width: 2px;
  paint-order: stroke;
`;
const Credit = styled.text<{ $link?: boolean }>`
  font: 11.500px 'Liberation Sans', sans-serif;
  fill: ${p => (p.$link ? '#2339a0' : '#000')};
  stroke: #f4f6fb;
  stroke-width: 1.500px;
  paint-order: stroke;
  text-decoration: ${p => (p.$link ? 'underline' : 'none')};
`;
const WorldMap = () => (
  <svg width="526" height="279" viewBox="0 0 526 279">
    <defs>
      <filter id="coast" x="0" y="0" width="1" height="1">
        <feTurbulence type="fractalNoise" baseFrequency=".14" numOctaves="3" seed="4" />
        <feDisplacementMap in="SourceGraphic" scale="8" xChannelSelector="R" yChannelSelector="G" />
      </filter>
    </defs>
    <rect width="526" height="279" fill="#abc7f2" />
    <svg width="526" height="279" viewBox="45 234 1398 837" preserveAspectRatio="none">
      <g filter="url(#coast)">
        <rect x="20" y="210" width="1450" height="900" fill="#abc7f2" />
        <path d={land} fill="#efeeea" stroke="#efeeea" strokeWidth="2" />
        <path d="M508 225H655L640 262 620 290 600 310 575 322 565 345 558 380 540 378 530 355 525 320 540 300 530 270 525 250z" fill="#f9f9f8" />
        <path d="M50 270l40 15 20 15-30-5zM170 330l12 20 2 30-14-10z" fill="#fafafa" />
        <path d={lakes} fill="#abc7f2" />
      </g>
    </svg>
    {places.map((p, i) => <Place key={i} $ocean={p.ocean} x={p.x} y={p.y} textLength={p.w} lengthAdjust="spacingAndGlyphs">{p.t}</Place>)}
    <path d="M6 257h5.500v5.500H6z" fill="#f25022" /><path d="M12.300 257h5.500v5.500h-5.500z" fill="#7fba00" />
    <path d="M6 263.300h5.500v5.500H6z" fill="#00a4ef" /><path d="M12.300 263.300h5.500v5.500h-5.500z" fill="#ffb900" />
    <text x="21" y="267" fontFamily="Open Sans" fontSize="10.500" fill="#737373" textLength="61" lengthAdjust="spacingAndGlyphs">Microsoft Bing</text>
    <Credit x="148" y="270" textLength="228">© 2025 TomTom, © 2025 Microsoft Corporation,</Credit>
    <Credit $link x="380" y="270" textLength="87">© OpenStreetMap</Credit>
    <Credit $link x="476" y="270" textLength="29">Terms</Credit>
  </svg>
);

const PieChart = () => (
  <svg width="337" height="330" viewBox="51 573 337 330">
    <circle cx="169.300" cy="739.300" r="62" fill={BLUE} />
    <path d="M169.300 739.300V677.300A62 62 0 0 0 109.100 754z" fill={NAVY} />
    <path d="M124 677h15l3 6M139.500 807.500h15l1-6" fill="none" stroke="#9a8530" />
    <AxisText x="119.500" y="673" textAnchor="end">49</AxisText>
    <AxisText x="65" y="693" textLength="54" lengthAdjust="spacingAndGlyphs">(28.82%)</AxisText>
    <AxisText x="134.500" y="804" textAnchor="end">121</AxisText>
    <AxisText x="81" y="822.500" textLength="54" lengthAdjust="spacingAndGlyphs">(71.18%)</AxisText>
    <AxisText $size={15} x="281.500" y="716" textLength="78" fontWeight="700" lengthAdjust="spacingAndGlyphs">peak_hour</AxisText>
    <circle cx="288.700" cy="735.500" r="6.200" fill={BLUE} />
    <AxisText $size={15} x="297" y="741" textLength="61">Off-Peak</AxisText>
    <circle cx="288.700" cy="765.500" r="6.200" fill={NAVY} />
    <AxisText $size={15} x="297" y="771" textLength="33">Peak</AxisText>
  </svg>
);

const CountCard = () => (
  <svg width="526" height="299" viewBox="981 596 526 299">
    <path d="M987 601V890H1501z" fill="#656562" />
    <BigNumber transform="translate(1210 768) scale(.87 1)" x="0 41">49</BigNumber>
  </svg>
);

/* ---------- field list ---------- */
const Sigma = () => <S w={11} h={13} c="#e8e8e8"><path strokeWidth="1.200" d="M10.500 2.500V.8H1L6 6 1 12H10.500V10.300" /></S>;
const TableIcon = () => <S w={13} h={13} c="#e8e8e8"><rect x=".7" y=".7" width="11.600" height="11.600" rx="2" /><path d="M.7 4.500h11.600M.7 8.500h11.600M4.500.7v11.600M8.500.7v11.600" /></S>;
const Calendar = () => <S w={13} h={13} c="#e8e8e8"><rect x=".7" y=".7" width="11.600" height="11.600" rx="2" /><path d="M.7 3.500h11.600" /><path d="M3 6.500h7M3 9.500h5" strokeDasharray="1.500 1.200" strokeWidth="1.500" /></S>;
const Hierarchy = () => <S w={14} h={13} c="#d0d0d0"><circle cx="2.800" cy="6.500" r="2" /><circle cx="9" cy="3" r="2" /><circle cx="9" cy="10" r="2" /><path d="M4.500 5.500L7 4M4.500 7.500L7 9M11 3h2.500M11 10h2.500M9 5v3M12 1.500c2 0 1 3 0 3M12 8.500c2 0 1 3 0 3" /></S>;

const fields: { t: string; sum?: boolean }[] = [
  { t: 'day', sum: true }, { t: 'dropoff_latitude', sum: true }, { t: 'dropoff_longitu...', sum: true },
  { t: 'fare_amount', sum: true }, { t: 'hour', sum: true }, { t: 'month', sum: true },
  { t: 'passenger_count', sum: true }, { t: 'peak_hour' },
];
const tail: { t: string; sum?: boolean }[] = [{ t: 'pickup_latitude', sum: true }, { t: 'pickup_longitude', sum: true }, { t: 'weekday' }];
const FieldRow = ({ t, sum }: { t: string; sum?: boolean }) => (
  <Row $pl={44}><Check /><Glyph $w={8} /><Glyph $w={18}>{sum && <Sigma />}</Glyph>{t}</Row>
);

export default function App() {
  return (
    <Window>
      <Global />
      <MenuBar>
        <MenuItem $w={55}><span>File</span></MenuItem>
        <MenuItem $w={61} $active><span>Home</span></MenuItem>
        <MenuItem $w={58.500}><span>Insert</span></MenuItem>
        <MenuItem $w={83}><span>Modeling</span></MenuItem>
        <MenuItem $w={52.500}><span>View</span></MenuItem>
        <MenuItem $w={80}><span>Optimize</span></MenuItem>
        <MenuItem $w={60}><span>Help</span></MenuItem>
        <ShareButton>
          <S w={16} h={15} c="#ccd6d3"><path d="M4 3.500H1v10.500h11V11M4 10c0-4 3-6 7-6V1.500L15 5.500 11 9V7C8 7 6 7.500 4 10z" /></S>
          <span>Share</span>
          <Chevron s={8} />
        </ShareButton>
      </MenuBar>

      <Ribbon>
        <Group $w={161} $pl={12.500}>
          <GroupItems>
            <Command $w={32} $dx={1} $off>
              <S w={32} h={32} c="#6b6b6b">
                <path d="M9 4.500H4.500v23H15M19 4.500h6v8" stroke="#7c5a2a" strokeWidth="2.500" />
                <path d="M9 6.500h12v-3h-3c0-3-6-3-6 0H9z" /><path d="M17.500 13.500h12v17h-12z" fill="#292929" />
              </S>
              <div>Paste</div>
            </Command>
            <ClipList>
              <ClipRow>
                <S w={14} h={17} c="#6b6b6b"><path d="M4 1l5.500 11M10 1L4.500 12" /><path d="M2 12h3v3.500H2zM9 12h3v3.500H9z" stroke="#2d5876" strokeWidth="1.500" /></S>Cut
              </ClipRow>
              <ClipRow>
                <S w={14} h={17} c="#6b6b6b"><path d="M4 13H.5V1.500h6l2 2" /><path d="M5.500 4.500h5l3 3v8h-8zM7.500 9.500h4M7.500 12.500h4" /></S>Copy
              </ClipRow>
              <ClipRow>
                <S w={14} h={17} c="#6b6b6b"><path d="M8 5l4-4 1.500 1.500-4 4M6 4l5 5-1.500 1.500-5-5z" strokeWidth="1.300" /><path d="M4.500 6L.5 9l5 6 4-4z" fill="#7c5a2a" stroke="#8a7a60" /></S>Format painter
              </ClipRow>
            </ClipList>
          </GroupItems>
          <GroupLabel>Clipboard</GroupLabel>
        </Group>
        {groups.map(g => (
          <Group key={g.label} $w={g.w} $pl={g.pl}>
            <GroupItems>
              {g.items.map(c => (
                <Command key={c.i} $w={c.w} $dx={c.dx} $off={c.off}>
                  <S w={32} h={32} c={W}>{icons[c.i]}</S>
                  {c.l.map((t, i) => <div key={i}>{t}{c.drop && i === c.l.length - 1 && <Chevron s={5} />}</div>)}
                </Command>
              ))}
            </GroupItems>
            <GroupLabel>{g.label}</GroupLabel>
          </Group>
        ))}
        <Collapse><Chevron s={7} up w={1.800} c="#e0e0e0" /></Collapse>
      </Ribbon>

      <Body>
        <Rail>
          <RailItem $active><S w={16} h={16} c="#fff"><path d="M1.500 1v13.500H15M4.500 4.500h2v8h-2zM8 7.500h2v5H8zM11.500 3.500h2v9h-2z" strokeWidth="1.200" /></S></RailItem>
          <RailItem><S w={16} h={16}><path d="M.5.500h15v15H.5zM.5 4h15M.5 8h15M.5 12h15M5.500 4v11.500M10.500 4v11.500" strokeWidth="1.200" /></S></RailItem>
          <RailItem><S w={19} h={18}><path d="M.5 6h7v6h-7zM.5 8.500h7M11 .500h7v6h-7zM11 3h7M11 11h7v6h-7zM11 13.500h7M5 6V3.500h6M5 12v2.500h6" strokeWidth="1.200" /></S></RailItem>
          <RailItem><S w={20} h={20}><path d="M5.500 11V2.500h6l4 4V15M11.500 2.500V7h4M17.500 8v7l-2 2" strokeWidth="1.200" /><text x="0" y="17.500" fontSize="7" fontWeight="600" fontFamily="Open Sans" fill="#e0e0e0" stroke="none" textLength="14">DAX</text></S></RailItem>
          <RailItem><S w={20} h={20}><path d="M5.500 11V2.500h6l4 4V11M11.500 2.500V7h4" strokeWidth="1.200" /><text x="1" y="17.500" fontSize="7" fontWeight="600" fontFamily="Open Sans" fill="#e0e0e0" stroke="none" textLength="18.500">TMDL</text></S></RailItem>
        </Rail>

        <Work>
          <WorkTop>
            <Scroller>
              <Page>
                <PageEdge>
                  <Report>
                    <Visual $w={337} $h={350}>
                      <Title $ls={0.720}>{'Count of fare_amount by\nfare_amount'}</Title>
                      <LineChart />
                    </Visual>
                    <Visual $w={444} $h={350}>
                      <Title $ls={0.800}>Average of fare_amount by fare_amount</Title>
                      <KpiCard />
                    </Visual>
                    <Visual $w={532} $h={351} $bg="#f4c4ad">
                      <Title $ls={0.740}>Sum of fare_amount by pickup_latitude</Title>
                      <Legend>
                        <b>pickup_latitude</b>
                        <LegendItem $c={BLUE}>40.700059</LegendItem>
                        <LegendItem $c={NAVY}>40.704395</LegendItem>
                        <LegendItem $c="#e66c37">40.706073</LegendItem>
                        <LegendItem $c="#6b007b">40.707166</LegendItem>
                        <LegendArrow />
                      </Legend>
                      <MapBox><WorldMap /></MapBox>
                    </Visual>
                    <Visual $w={337} $h={360} $bg="#d9b300">
                      <Title>Count of fare_amount by peak_hour</Title>
                      <PieChart />
                    </Visual>
                    <Visual $w={444} $h={348} $top={12} $bg="#41a4ff">
                      <SlicerTitle>passenger_count, peak_hour, month</SlicerTitle>
                      {[1, 2, 3, 4, 5, 6].map(n => (
                        <SlicerRow key={n}><Chevron s={10.500} c="#727a84" w={1.200} /><SlicerBox $on={n === 3} /><span>{n}</span></SlicerRow>
                      ))}
                    </Visual>
                    <Visual $w={526} $h={325} $top={23} $bg="#666">
                      <Title>Count of passenger_count by peak_hour</Title>
                      <CountCard />
                    </Visual>
                  </Report>
                </PageEdge>
              </Page>
              <HTrack><HThumb /></HTrack>
            </Scroller>
            <VBar><VTrack><VThumb /></VTrack></VBar>
            <FilterPane>
              <Double left c="#333" />
              <S w={12} h={12} c="#3b3a5a"><path d="M10.500 1v10M7 3v6M4 4.500v3" strokeWidth="1.400" /></S>
              <FilterText>Filters</FilterText>
            </FilterPane>
          </WorkTop>
          <TabBar>
            <ViewButton $w={24} $ml={10} $on><S w={18} h={18} c="#fff"><rect x="1.700" y="1.700" width="14.600" height="11" rx="2" strokeWidth="1.500" /><path d="M6 13v2.500M12 13v2.500M4 16h10" strokeWidth="1.500" /></S></ViewButton>
            <ViewButton $w={24} $ml={20}><S w={14} h={20} c="#fff"><rect x="2" y="1" width="9.500" height="16.500" rx="2" strokeWidth="1.600" /><path d="M5 14.500h3.500" /></S></ViewButton>
            <Arrows>
              <S w={7} h={9} c="#c8c8c8"><path d="M5.500 1v7L1.500 4.500z" /></S>
              <S w={7} h={9} c="#c8c8c8"><path d="M1.500 1v7l4-3.500z" /></S>
            </Arrows>
            <Tab>Page 1</Tab>
            <AddTab><S w={12} h={12} c="#1c1c1c"><path d="M6 .500v11M.5 6h11" strokeWidth="2.400" /></S></AddTab>
          </TabBar>
        </Work>

        <Panel $w={181}>
          <PanelHead $r={10}>Visualizations<Double /></PanelHead>
          <BuildTitle>Build visual</BuildTitle>
          <ModeRow>
            <ModeButton $on>
              <S w={24} h={26} c="#ddd"><path d="M0 2h19" stroke="#aaa" /><path d="M.5 6.500h23v7H.5zM.5 17.500h23v7H.5z" fill={TEAL} strokeDasharray="2 1.500" /></S>
            </ModeButton>
            <ModeButton>
              <S w={26} h={26}><path d="M11 24.500H1.500V1.500h9l6 6v3M10.500 1.500v6h6z" strokeWidth="1.300" /><path d="M10.500 1.500v6h6z" fill="#fff" /><path d="M24 9.500L15 17M25 11l-8 8M15 17l2.500 2.500c-1 4-3 5-7.500 5 2-1 1.500-6 5-7.500z" stroke="#bbb" fill="#555" /></S>
            </ModeButton>
          </ModeRow>
          <S w={180} h={9} c="#6b6b6b"><path d="M0 8.500h15.500L24 .800l8.500 7.700H180" /></S>
          <IconGrid>
            {gallery.map((g, i) => <S key={i} w={18} h={18}>{g}</S>)}
          </IconGrid>
          <More>...</More>
          <WellLabel $h={30}>Values</WellLabel>
          <Well>Add data fields here</Well>
          <WellLabel $b $h={37}>Drill through</WellLabel>
          <WellLabel $h={14}>Cross-report<Toggle>Off</Toggle></WellLabel>
          <WellLabel $h={38}>Keep all filters<Toggle $on>On</Toggle></WellLabel>
          <Well $black>Add drill-through fields here</Well>
        </Panel>

        <Panel $w={181}>
          <PanelHead $r={10}>Data<Double /></PanelHead>
          <Search>
            <S w={15} h={15} c="#b0b0b0"><circle cx="6" cy="6" r="5" /><path d="M9.800 9.800L14.500 14.500" /></S>
            Search
          </Search>
          <Row $pl={16}>
            <Glyph $w={13}><svg width="6" height="9" viewBox="0 0 6 9" fill="none" stroke="#d0d0d0" strokeWidth="1.300"><path d="M1 1l3.500 3.500L1 8" /></svg></Glyph>
            <Glyph $w={18}><TableIcon /></Glyph>uber_fares_enhanced (...
          </Row>
          <Row $pl={15}>
            <Glyph $w={14}><Chevron s={7} c="#d0d0d0" /></Glyph>
            <Glyph $w={18}><TableIcon /></Glyph>uber_fares_large_sam...
          </Row>
          {fields.map(f => <FieldRow key={f.t} {...f} />)}
          <Row $pl={29}><Glyph $w={15}><Chevron s={7} c="#d0d0d0" /></Glyph><Check /><Glyph $w={8} /><Glyph $w={18}><Calendar /></Glyph>pickup_datetime</Row>
          <Row $pl={44}><Glyph $w={15}><Chevron s={7} c="#d0d0d0" /></Glyph><Check /><Glyph $w={7} /><Glyph $w={19}><Hierarchy /></Glyph>Date Hierarc...</Row>
          {['Year', 'Quarter', 'Month', 'Day'].map(t => <Row key={t} $pl={74}><Check /><Glyph $w={26} />{t}</Row>)}
          {tail.map(f => <FieldRow key={f.t} {...f} />)}
        </Panel>
      </Body>
      <StatusEdge />
    </Window>
  );
}
